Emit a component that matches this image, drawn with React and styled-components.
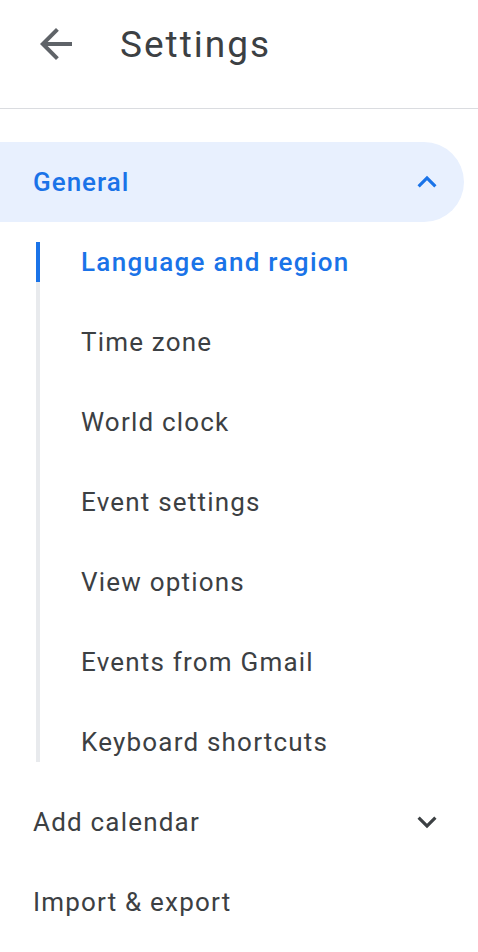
import React from "react";
import styled, { createGlobalStyle } from "styled-components";

const GlobalStyle = createGlobalStyle`
  html, body {
    margin: 0;
    padding: 0;
    background: #ffffff;
  }
  body {
    font-family: Roboto, "Noto Sans", Arial, sans-serif;
    -webkit-font-smoothing: antialiased;
  }
`;

const Page = styled.div`
  width: 478px;
  min-height: 952px;
  background: #ffffff;
  overflow: hidden;
`;

const Header = styled.header`
  align-items: center;
  border-bottom: 1px solid #dadce0;
  box-sizing: border-box;
  display: flex;
  height: 109px;
  padding: 0 0 20px 32px;
`;

const IconButton = styled.button`
  align-items: center;
  background: none;
  border: 0;
  color: #5f6368;
  cursor: pointer;
  display: flex;
  height: 48px;
  justify-content: center;
  padding: 0;
  width: 48px;
`;

const Title = styled.h1`
  color: #3c4043;
  font-family: Roboto, "Noto Sans", Arial, sans-serif;
  font-size: 37px;
  font-weight: 400;
  letter-spacing: 2px;
  margin: 0 0 0 40px;
`;

const Nav = styled.nav`
  display: flex;
  flex-direction: column;
  padding-top: 33px;
`;

const SectionRow = styled.div`
  align-items: center;
  background: ${(p) => (p.$open ? "#e8f0fe" : "transparent")};
  border-radius: 0 40px 40px 0;
  box-sizing: border-box;
  color: ${(p) => (p.$open ? "#1a73e8" : "#3c4043")};
  display: flex;
  font-size: 26px;
  font-weight: ${(p) => (p.$open ? 500 : 400)};
  height: 80px;
  justify-content: space-between;
  letter-spacing: ${(p) => (p.$open ? "1px" : "1.2px")};
  padding: 0 18px 0 33px;
  width: 464px;
`;

const Chevron = styled.svg`
  fill: ${(p) => p.$color};
  height: 38px;
  width: 38px;
`;

const SubList = styled.ul`
  border-left: 4px solid #e8eaed;
  display: flex;
  flex-direction: column;
  gap: 40px;
  list-style: none;
  margin: 20px 0 20px 36px;
  padding: 0;
`;

const SubItem = styled.li`
  align-items: center;
  border-left: 4px solid ${(p) => (p.$active ? "#1a73e8" : "transparent")};
  color: ${(p) => (p.$active ? "#1a73e8" : "#3c4043")};
  display: flex;
  font-size: 26px;
  font-weight: ${(p) => (p.$active ? 500 : 400)};
  height: 40px;
  letter-spacing: ${(p) => (p.$active ? "1.3px" : "1.2px")};
  margin-left: -4px;
  padding-left: 41px;
`;

const ArrowBack = () => (
  <svg width="48" height="48" viewBox="0 0 24 24" fill="currentColor">
    <path d="M20 11H7.83l5.59-5.59L12 4l-8 8 8 8 1.41-1.41L7.83 13H20v-2z" />
  </svg>
);

const ExpandLess = ({ color }) => (
  <Chevron viewBox="0 0 24 24" $color={color}>
    <path d="M12 8l-6 6 1.41 1.41L12 10.83l4.59 4.58L18 14z" />
  </Chevron>
);

const ExpandMore = ({ color }) => (
  <Chevron viewBox="0 0 24 24" $color={color}>
    <path d="M16.59 8.59L12 13.17 7.41 8.59 6 10l6 6 6-6z" />
  </Chevron>
);

const generalItems = [
  "Language and region",
  "Time zone",
  "World clock",
  "Event settings",
  "View options",
  "Events from Gmail",
  "Keyboard shortcuts",
];

export default function App() {
  return (
    <Page>
      <GlobalStyle />
      <Header>
        <IconButton aria-label="Back">
          <ArrowBack />
        </IconButton>
        <Title>Settings</Title>
      </Header>
      <Nav>
        <SectionRow $open>
          <span>General</span>
          <ExpandLess color="#1a73e8" />
        </SectionRow>
        <SubList>
          {generalItems.map((item, i) => (
            <SubItem key={item} $active={i === 0}>
              {item}
            </SubItem>
          ))}
        </SubList>
        <SectionRow>
          <span>Add calendar</span>
          <ExpandMore color="#3c4043" />
        </SectionRow>
        <SectionRow>
          <span>Import &amp; export</span>
        </SectionRow>
      </Nav>
    </Page>
  );
}
